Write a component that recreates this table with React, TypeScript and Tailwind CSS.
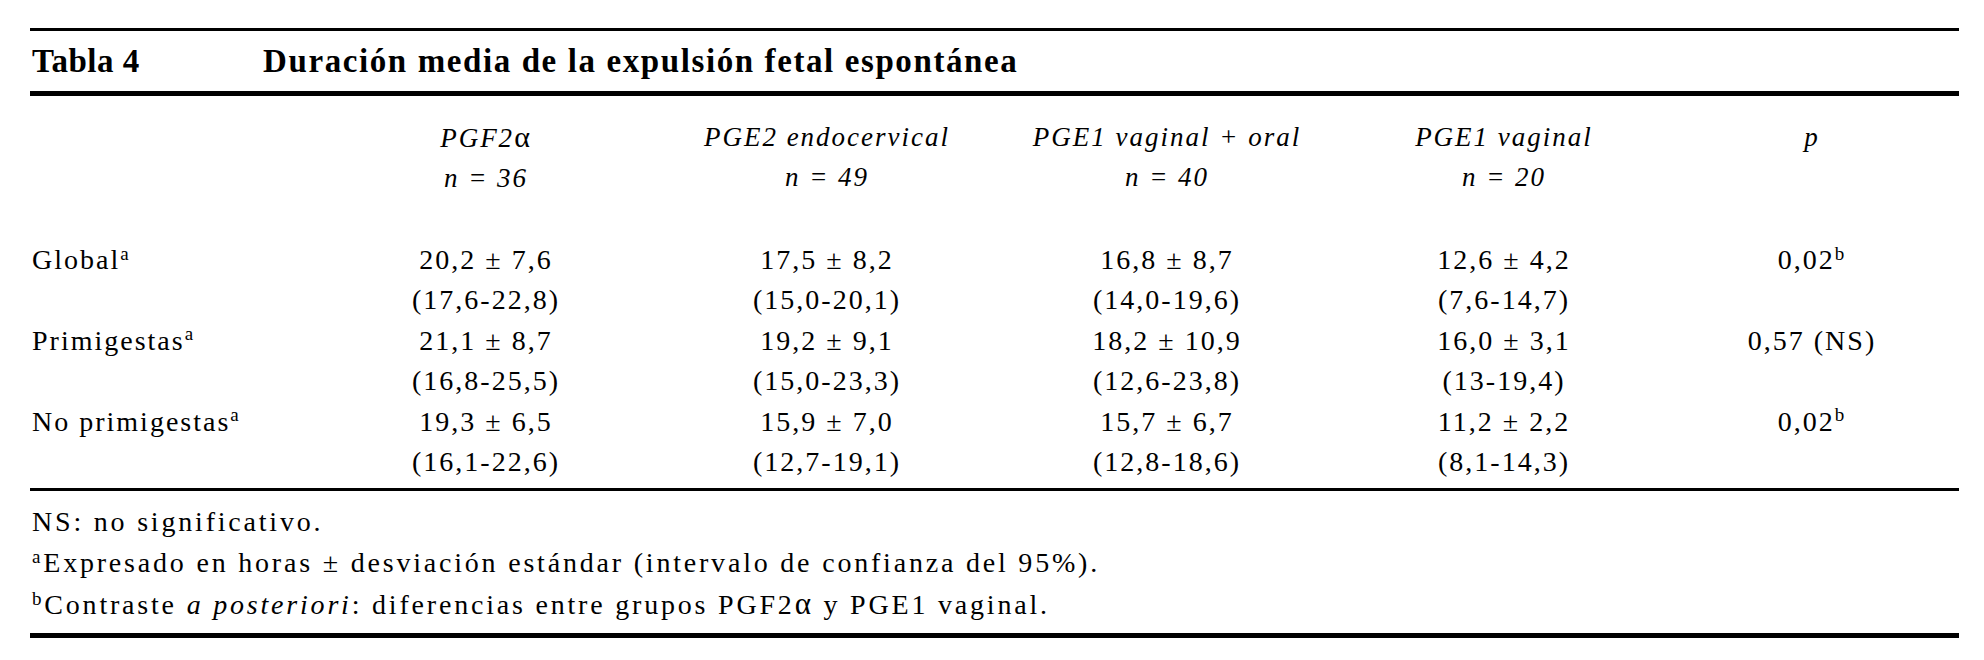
const groups = [
  { name: 'PGF2', alpha: true, n: '36' },
  { name: 'PGE2 endocervical', alpha: false, n: '49' },
  { name: 'PGE1 vaginal + oral', alpha: false, n: '40' },
  { name: 'PGE1 vaginal', alpha: false, n: '20' },
];

const rows = [
  {
    label: 'Global',
    values: [
      ['20,2 ± 7,6', '(17,6-22,8)'],
      ['17,5 ± 8,2', '(15,0-20,1)'],
      ['16,8 ± 8,7', '(14,0-19,6)'],
      ['12,6 ± 4,2', '(7,6-14,7)'],
    ],
    p: '0,02',
    pSup: 'b',
  },
  {
    label: 'Primigestas',
    values: [
      ['21,1 ± 8,7', '(16,8-25,5)'],
      ['19,2 ± 9,1', '(15,0-23,3)'],
      ['18,2 ± 10,9', '(12,6-23,8)'],
      ['16,0 ± 3,1', '(13-19,4)'],
    ],
    p: '0,57 (NS)',
    pSup: '',
  },
  {
    label: 'No primigestas',
    values: [
      ['19,3 ± 6,5', '(16,1-22,6)'],
      ['15,9 ± 7,0', '(12,7-19,1)'],
      ['15,7 ± 6,7', '(12,8-18,6)'],
      ['11,2 ± 2,2', '(8,1-14,3)'],
    ],
    p: '0,02',
    pSup: 'b',
  },
];

export default function App() {
  return (
    <div className="min-h-screen bg-white text-black font-['Liberation_Serif',serif] pt-[28px] pl-[30px]">
      <div className="w-[1929px]">
        <div className="h-[3px] bg-black" />

        {/* Title */}
        <div className="h-[60px] flex items-center text-[33px] font-bold leading-none">
          <span className="w-[233px] pl-[2px] tracking-[0.5px]">Tabla 4</span>
          <span className="tracking-[1.6px]">Duración media de la expulsión fetal espontánea</span>
        </div>

        <div className="h-[5px] bg-black" />

        {/* Column headers */}
        <div className="grid grid-cols-[317px_278px_404px_276px_398px_218px] pt-[21px] italic text-[27px] leading-[40px] tracking-[2px]">
          <div />
          {groups.map((g) => (
            <div key={g.name} className="text-center">
              <div>
                {g.name}
                {g.alpha && <span className="not-italic text-[30px]">α</span>}
              </div>
              <div>n = {g.n}</div>
            </div>
          ))}
          <div className="text-center">p</div>
        </div>

        {/* Data */}
        <div className="mt-[42px] mb-[6px] grid grid-cols-[317px_278px_404px_276px_398px_218px] text-[28px] leading-[40.4px] tracking-[2px]">
          {rows.map((r) => (
            <div key={r.label} className="contents">
              <div className="pl-[2px]">
                {r.label}
                <sup className="text-[19px]">a</sup>
              </div>
              {r.values.map((v, i) => (
                <div key={i} className="text-center">
                  <div>{v[0]}</div>
                  <div>{v[1]}</div>
                </div>
              ))}
              <div className="text-center">
                {r.p}
                {r.pSup && <sup className="text-[19px]">{r.pSup}</sup>}
              </div>
            </div>
          ))}
        </div>

        <div className="h-[3px] bg-black" />

        {/* Footnotes */}
        <div className="pt-[10px] pl-[2px] text-[28px] leading-[41px] tracking-[2.8px]">
          <div>NS: no significativo.</div>
          <div>
            <sup className="text-[19px]">a</sup>Expresado en horas ± desviación estándar (intervalo de confianza del 95%).
          </div>
          <div>
            <sup className="text-[19px]">b</sup>Contraste <i>a posteriori</i>: diferencias entre grupos PGF2
            <span className="text-[31px]">α</span> y PGE1 vaginal.
          </div>
        </div>

        <div className="mt-[8px] h-[5px] bg-black" />
      </div>
    </div>
  );
}
